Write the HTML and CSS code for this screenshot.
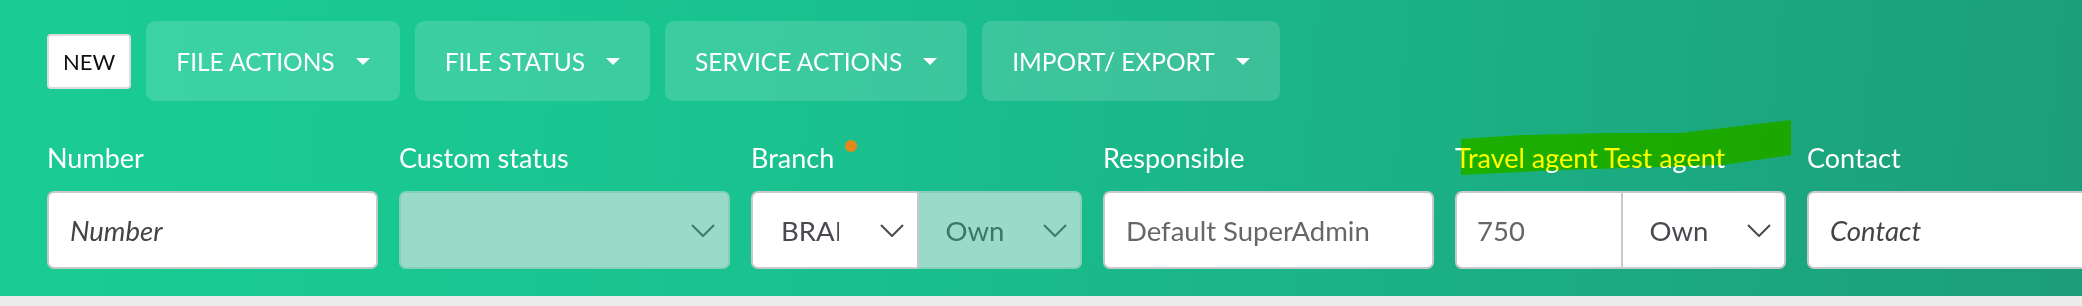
FILE: index.html
```html
<!DOCTYPE html>
<html lang="en">
<head>
    <meta charset="UTF-8">
    <meta name="viewport" content="width=device-width, initial-scale=1.0">
    <title>Files</title>
    <link rel="stylesheet" href="styles.css">
</head>
<body>
    <div class="header">
        <div class="toolbar">
            <button class="btn-new">NEW</button>
            <button class="btn-menu">FILE ACTIONS <span class="caret"></span></button>
            <button class="btn-menu">FILE STATUS <span class="caret"></span></button>
            <button class="btn-menu">SERVICE ACTIONS <span class="caret"></span></button>
            <button class="btn-menu">IMPORT/ EXPORT <span class="caret"></span></button>
        </div>

        <div class="filters">
            <div class="field">
                <label>Number</label>
                <input type="text" placeholder="Number">
            </div>

            <div class="field">
                <label>Custom status</label>
                <div class="select disabled">
                    <span class="value"></span>
                    <svg class="chevron" width="24" height="13" viewBox="0 0 24 13"><polyline points="1,1 12,12 23,1"/></svg>
                </div>
            </div>

            <div class="field">
                <label>Branch <span class="dot"></span></label>
                <div class="split">
                    <div class="select part-left">
                        <span class="value clip">BRANCH 1</span>
                        <svg class="chevron" width="24" height="13" viewBox="0 0 24 13"><polyline points="1,1 12,12 23,1"/></svg>
                    </div>
                    <div class="select part-right disabled">
                        <span class="value">Own</span>
                        <svg class="chevron" width="24" height="13" viewBox="0 0 24 13"><polyline points="1,1 12,12 23,1"/></svg>
                    </div>
                </div>
            </div>

            <div class="field">
                <label>Responsible</label>
                <input type="text" value="Default SuperAdmin">
            </div>

            <div class="field">
                <label class="marked">
                    Travel agent Test agent
                    <svg class="highlight" width="330" height="56" viewBox="0 0 330 56">
                        <polygon points="0,19 60,15 146,13 219,13 262,8 330,0 330,35 262,45 200,47 100,50 0,55"/>
                    </svg>
                </label>
                <div class="split">
                    <input type="text" class="part-left" value="750">
                    <div class="select part-right">
                        <span class="value">Own</span>
                        <svg class="chevron" width="24" height="13" viewBox="0 0 24 13"><polyline points="1,1 12,12 23,1"/></svg>
                    </div>
                </div>
            </div>

            <div class="field">
                <label>Contact</label>
                <input type="text" placeholder="Contact">
            </div>
        </div>
    </div>
</body>
</html>
```

FILE: styles.css
```css
* {
    box-sizing: border-box;
}
body {
    margin: 0;
    padding: 0;
    font-family: Lato, "Liberation Sans", sans-serif;
    background-color: #ececec;
}
.header {
    height: 296px;
    padding: 21px 0 0 47px;
    overflow: hidden;
    background: linear-gradient(95deg, #1acc94 0%, #19c38f 35%, #1bb487 62%, #1c9e79 100%);
}
.toolbar {
    display: flex;
    align-items: center;
    gap: 15px;
}
.btn-new {
    height: 55px;
    padding: 0 14px;
    background: white;
    color: #111;
    border: 2px solid #dcdcdc;
    border-radius: 4px;
    font-family: inherit;
    font-size: 22px;
}
.btn-menu {
    display: flex;
    align-items: center;
    gap: 21px;
    height: 80px;
    padding: 0 30px;
    background: rgba(255, 255, 255, 0.15);
    color: white;
    border: none;
    border-radius: 9px;
    font-family: inherit;
    font-size: 24.5px;
    cursor: pointer;
}
.caret {
    width: 0;
    height: 0;
    border-left: 7px solid transparent;
    border-right: 7px solid transparent;
    border-top: 7px solid white;
}
.filters {
    display: grid;
    grid-template-columns: repeat(6, 331px);
    gap: 21px;
    margin-top: 42px;
}
.field label {
    display: block;
    position: relative;
    height: 30px;
    margin-bottom: 18px;
    color: white;
    font-size: 27px;
    line-height: 30px;
    white-space: nowrap;
}
.dot {
    display: inline-block;
    position: relative;
    top: -3px;
    width: 12px;
    height: 12px;
    margin-left: 4px;
    border-radius: 50%;
    background: #e3891c;
    vertical-align: top;
}
.highlight {
    position: absolute;
    left: 6px;
    top: -23px;
    fill: #ffff00;
    mix-blend-mode: multiply;
}
input, .select {
    height: 78px;
    border: 2px solid #c9c9c9;
    border-radius: 7px;
    background: white;
    font-family: inherit;
    font-size: 27.5px;
}
input {
    width: 100%;
    padding: 0 21px;
    color: #666;
    outline: none;
}
input::placeholder {
    color: #444;
    font-style: italic;
}
.select {
    display: flex;
    align-items: center;
    padding: 0 13px 0 28px;
    color: #474a4f;
}
.select .value {
    white-space: nowrap;
}
.select .clip {
    width: 58px;
    overflow: hidden;
}
.chevron {
    margin-left: auto;
    flex-shrink: 0;
    fill: none;
    stroke: #474a4f;
    stroke-width: 2;
}
.select.disabled {
    background: #99dbc8;
    border-color: #88cfb9;
    color: #3e7565;
}
.select.disabled .chevron {
    stroke: #3d7a68;
}
.split {
    display: grid;
    grid-template-columns: 1fr 1fr;
}
.split .part-left {
    border-right: none;
    border-radius: 7px 0 0 7px;
}
.split .part-right {
    border-left: 2px solid #c9c9c9;
    border-radius: 0 7px 7px 0;
    padding-left: 27px;
}
.split .select.part-left {
    padding-left: 28px;
}
.split input.part-left {
    padding-left: 20px;
}
```
